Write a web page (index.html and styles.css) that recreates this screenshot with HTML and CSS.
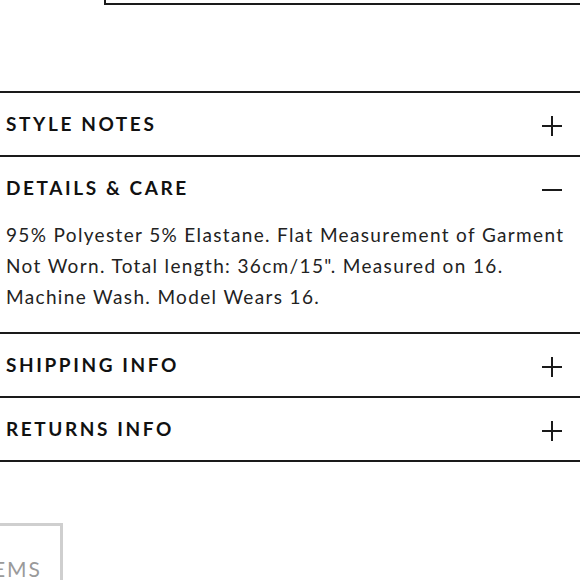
FILE: index.html
```html
<!DOCTYPE html>
<html>
<head>
<meta charset="utf-8">
<link rel="stylesheet" href="styles.css">
</head>
<body>
<div class="top-box"></div>
<div class="accordion">
  <div class="item">
    <div class="head"><span class="title">STYLE NOTES</span><span class="icon plus"></span></div>
  </div>
  <div class="item">
    <div class="head"><span class="title">DETAILS &amp; CARE</span><span class="icon minus"></span></div>
    <div class="body">95% Polyester 5% Elastane. Flat Measurement of Garment Not Worn. Total length: 36cm/15". Measured on 16. Machine Wash. Model Wears 16.</div>
  </div>
  <div class="item">
    <div class="head"><span class="title">SHIPPING INFO</span><span class="icon plus"></span></div>
  </div>
  <div class="item last">
    <div class="head"><span class="title">RETURNS INFO</span><span class="icon plus"></span></div>
  </div>
</div>
<div class="more"><span>ITEMS</span></div>
</body>
</html>
```
FILE: styles.css
```css
html, body {
  margin: 0;
  padding: 0;
  background: #fff;
  overflow: hidden;
}
body {
  width: 580px;
  height: 580px;
  font-family: Lato, "Liberation Sans", sans-serif;
  color: #1a1a1a;
}
.top-box {
  height: 3px;
  margin-left: 104px;
  margin-right: -20px;
  border-left: 2px solid #1a1a1a;
  border-bottom: 2px solid #1a1a1a;
}
.accordion {
  margin-top: 86px;
}
.item {
  border-top: 2px solid #1a1a1a;
}
.item.last {
  border-bottom: 2px solid #1a1a1a;
}
.head {
  height: 62px;
  display: flex;
  align-items: center;
  justify-content: space-between;
  padding: 0 18px 0 6px;
}
.title {
  font-weight: 700;
  font-size: 19px;
  letter-spacing: 2.6px;
  color: #111;
  margin-top: -1px;
}
.icon {
  position: relative;
  width: 20px;
  height: 20px;
  margin-top: 3px;
}
.icon::before, .icon::after {
  content: "";
  position: absolute;
  background: #1a1a1a;
}
.icon::before {
  left: 0;
  right: 0;
  top: 9px;
  height: 2px;
}
.plus::after {
  top: 0;
  bottom: 0;
  left: 9px;
  width: 2px;
}
.body {
  padding: 0 10px 20px 6px;
  font-size: 19px;
  line-height: 31px;
  letter-spacing: 1.35px;
  color: #222;
}
.more {
  margin-top: 61px;
  margin-left: -60px;
  width: 123px;
  height: 60px;
  border: 3px solid #cfcfcf;
  display: flex;
  justify-content: flex-end;
  align-items: flex-start;
  box-sizing: border-box;
  padding: 30px 18px 0 0;
  font-size: 21px;
  letter-spacing: 2px;
  color: #9a9a9a;
}
```
